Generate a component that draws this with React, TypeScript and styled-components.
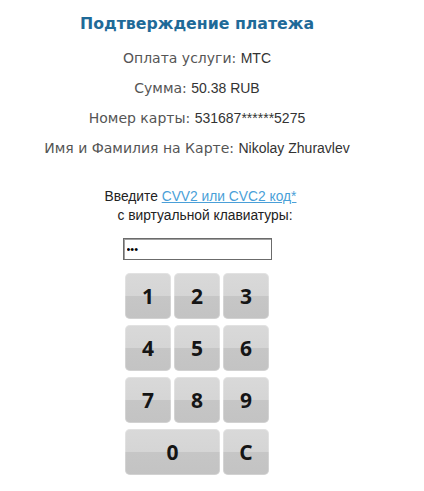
import React from "react";
import styled, { createGlobalStyle } from "styled-components";

const GlobalStyle = createGlobalStyle`
  body {
    margin: 0;
    background: #ffffff;
    font-family: "Liberation Sans", Arial, sans-serif;
  }
`;

const Page = styled.div`
  width: 394px;
  display: flex;
  flex-direction: column;
  align-items: center;
  text-align: center;
`;

const Title = styled.h1`
  margin: 14px 0 0;
  font-family: "DejaVu Sans", Tahoma, sans-serif;
  font-size: 15.75px;
  line-height: 20px;
  font-weight: bold;
  color: #1f6a98;
`;

const InfoList = styled.div`
  margin-top: 9px;
  display: flex;
  flex-direction: column;
`;

const InfoRow = styled.div`
  height: 30px;
  line-height: 30px;
  white-space: nowrap;
`;

const Label = styled.span`
  font-family: "DejaVu Sans", Tahoma, sans-serif;
  font-size: 14px;
  color: #555555;
`;

const Value = styled.span`
  font-family: "Liberation Sans", Arial, sans-serif;
  font-size: 14px;
  color: #333333;
`;

const Prompt = styled.div`
  margin-top: 24px;
  display: flex;
  flex-direction: column;
  align-items: center;
  font-size: 13.8px;
  line-height: 19px;
  color: #222222;
`;

const PromptLine = styled.div<{ $shift: number }>`
  padding-left: ${(p) => p.$shift}px;
  white-space: nowrap;
`;

const Link = styled.a`
  color: #4a9fd8;
  text-decoration: underline;
`;

const CodeInput = styled.input`
  box-sizing: border-box;
  margin-top: 13px;
  width: 149px;
  height: 22px;
  padding: 0 3px;
  border: 1px solid #6b6b6b;
  box-shadow: inset 1px 1px 0 #a0a0a0;
  font-size: 11px;
  color: #000;
  outline: none;
`;

const Keypad = styled.div`
  margin-top: 13px;
  display: grid;
  grid-template-columns: repeat(3, 46px);
  grid-auto-rows: 46px;
  column-gap: 3px;
  row-gap: 6px;
`;

const Key = styled.button<{ $wide?: boolean }>`
  grid-column: ${(p) => (p.$wide ? "span 2" : "span 1")};
  border: none;
  border-radius: 5px;
  padding: 0;
  background: linear-gradient(to bottom, #d9d9d9 0%, #d5d5d5 49%, #c6c6c6 51%, #c3c3c3 100%);
  box-shadow: inset 0 0 0 1px rgba(255, 255, 255, 0.25);
  font-family: "Open Sans", "DejaVu Sans", sans-serif;
  font-size: 21px;
  font-weight: 700;
  color: #151515;
  cursor: pointer;
`;

const keys: { label: string; wide?: boolean }[] = [
  { label: "1" },
  { label: "2" },
  { label: "3" },
  { label: "4" },
  { label: "5" },
  { label: "6" },
  { label: "7" },
  { label: "8" },
  { label: "9" },
  { label: "0", wide: true },
  { label: "C" },
];

export default function App() {
  return (
    <>
      <GlobalStyle />
      <Page>
        <Title>Подтверждение платежа</Title>
        <InfoList>
          <InfoRow>
            <Label>Оплата услуги: </Label>
            <Value>МТС</Value>
          </InfoRow>
          <InfoRow>
            <Label>Сумма: </Label>
            <Value>50.38 RUB</Value>
          </InfoRow>
          <InfoRow>
            <Label>Номер карты: </Label>
            <Value>531687******5275</Value>
          </InfoRow>
          <InfoRow>
            <Label>Имя и Фамилия на Карте: </Label>
            <Value>Nikolay Zhuravlev</Value>
          </InfoRow>
        </InfoList>
        <Prompt>
          <PromptLine $shift={7}>
            Введите <Link href="#">CVV2 или CVC2 код*</Link>
          </PromptLine>
          <PromptLine $shift={16}>с виртуальной клавиатуры:</PromptLine>
        </Prompt>
        <CodeInput type="password" defaultValue="123" readOnly />
        <Keypad>
          {keys.map((k) => (
            <Key key={k.label} $wide={k.wide}>
              {k.label}
            </Key>
          ))}
        </Keypad>
      </Page>
    </>
  );
}
